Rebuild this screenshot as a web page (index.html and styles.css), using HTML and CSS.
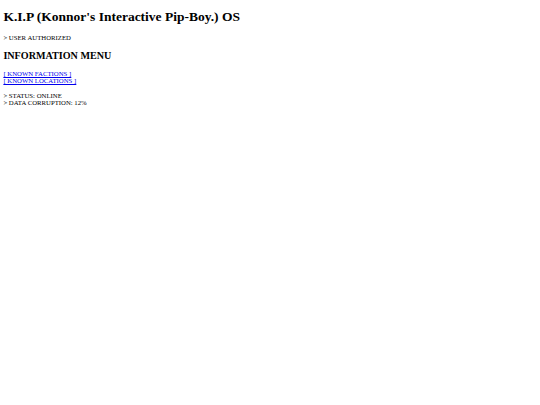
FILE: index.html
```html
<!DOCTYPE html>
<html lang="en">
<head>
    <meta charset="UTF-8" />
    <meta name="viewport" content="width=device-width, initial-scale=1.0" />
    <title>K.I.P OS</title>
    <link rel="stylesheet" href="styles.css">
</head>
<body>

<h1 class="title">K.I.P (Konnor's Interactive Pip-Boy.) OS</h1>

<p class="line">&gt; USER AUTHORIZED</p>

<h2 class="menu-title">INFORMATION MENU</h2>

<p class="line">
    <a href="#factions">[ KNOWN FACTIONS ]</a><br>
    <a href="#locations">[ KNOWN LOCATIONS ]</a>
</p>

<p class="line">
    &gt; STATUS: ONLINE<br>
    &gt; DATA CORRUPTION: 12%
</p>

</body>
</html>
```

FILE: styles.css
```css
/* Basic Styles */
body {
    font-family: "Liberation Serif", "Times New Roman", serif;
    background-color: #ffffff;
    color: #000000;
    margin: 3.375px;
}

.title {
    font-size: 13.5px;
    line-height: 15.5px;
    font-weight: bold;
    margin: 6px 0 9px;
}

.menu-title {
    font-size: 10.125px;
    line-height: 11.6px;
    font-weight: bold;
    margin: 8.4px 0;
}

.line {
    font-size: 6.75px;
    line-height: 7.6px;
    margin: 6.75px 0;
}

.line a {
    color: #0000ee;
}
```
